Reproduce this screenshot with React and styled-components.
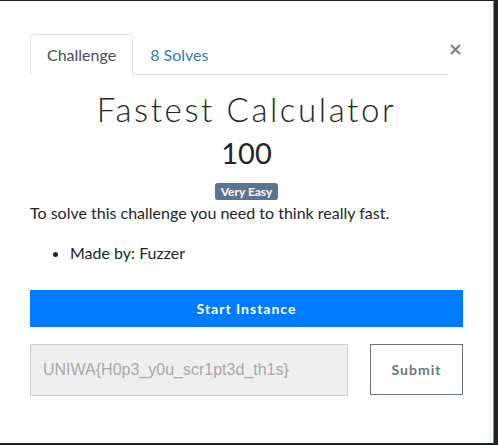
import React from 'react';
import styled, {createGlobalStyle} from 'styled-components';

const Global = createGlobalStyle`
    html, body {
        margin: 0;
        padding: 0;
        background: #1e241f;
    }
    body {
        font-family: Lato, "Open Sans", sans-serif;
        color: #212529;
    }
`;

const Modal = styled.div`
    position: relative;
    box-sizing: border-box;
    width: 494px;
    height: 442px;
    margin-top: 1px;
    background: #fff;
    border-right: 1px solid #8a8a8a;
    padding: 33px 30px 0 30px;
`;

const Header = styled.div`
    display: flex;
    align-items: flex-start;
`;

const Tabs = styled.ul`
    flex: 1;
    display: flex;
    margin: 0;
    padding: 0;
    list-style: none;
    border-bottom: 1px solid #dee2e6;
`;

const Tab = styled.li`
    box-sizing: border-box;
    height: 41px;
    padding: 0 16px;
    margin-bottom: -1px;
    display: flex;
    align-items: center;
    font-size: 16px;
    color: ${p => (p.active ? '#495057' : '#337ab7')};
    background: ${p => (p.active ? '#fff' : 'transparent')};
    border: 1px solid ${p => (p.active ? '#dee2e6' : 'transparent')};
    border-bottom-color: ${p => (p.active ? '#fff' : 'transparent')};
    border-radius: 4px 4px 0 0;
`;

const Close = styled.button`
    flex: none;
    box-sizing: border-box;
    border: 0;
    background: none;
    padding: 0 0 0 1px;
    margin-top: 5px;
    width: 14px;
    height: 20px;
    display: flex;
    align-items: center;
    justify-content: flex-start;
`;

const Title = styled.h2`
    margin: 14px 0 0 0;
    text-align: center;
    font-family: Lato, sans-serif;
    font-weight: 300;
    font-size: 33px;
    letter-spacing: 2.6px;
    line-height: 40px;
    color: #212529;
`;

const Points = styled.h3`
    margin: 4px 0 0 0;
    text-align: center;
    font-weight: 400;
    font-size: 29px;
    line-height: 40px;
`;

const BadgeRow = styled.div`
    display: flex;
    justify-content: center;
    margin-top: 10px;
`;

const Badge = styled.span`
    display: inline-block;
    background: #5b7390;
    color: #fff;
    font-size: 12px;
    font-weight: 700;
    line-height: 17px;
    padding: 0 6px;
    border-radius: 3px;
`;

const Description = styled.p`
    margin: 1px 0 0 0;
    font-size: 16px;
    line-height: 24px;
`;

const List = styled.ul`
    margin: 16px 0 0 0;
    padding-left: 40px;
    font-size: 16px;
    line-height: 24px;
`;

const StartButton = styled.button`
    display: block;
    width: 100%;
    height: 37px;
    margin-top: 25px;
    border: 0;
    background: #007bff;
    color: #fff;
    font-family: Lato, sans-serif;
    font-weight: 700;
    font-size: 14px;
    letter-spacing: 1px;
`;

const SubmitRow = styled.div`
    display: flex;
    justify-content: space-between;
    align-items: flex-start;
    margin-top: 17px;
`;

const FlagInput = styled.input`
    box-sizing: border-box;
    width: 318px;
    height: 52px;
    padding: 0 12px;
    background: #efefef;
    border: 1px solid #ccd0d4;
    font-family: "Liberation Sans", Arial, sans-serif;
    font-size: 16px;
    &::placeholder {
        color: #a8a8a8;
    }
`;

const SubmitButton = styled.button`
    box-sizing: border-box;
    width: 93px;
    height: 51px;
    background: #fff;
    border: 1px solid #6c757d;
    color: #6c757d;
    font-family: Lato, sans-serif;
    font-weight: 700;
    font-size: 14px;
    letter-spacing: 1px;
`;

export default function App() {
    return (
        <>
            <Global />
            <Modal>
                <Header>
                    <Tabs>
                        <Tab active>Challenge</Tab>
                        <Tab>8 Solves</Tab>
                    </Tabs>
                    <Close aria-label="Close">
                        <svg width="11" height="11" viewBox="0 0 11 11">
                            <path d="M1 1L10 10M10 1L1 10" stroke="#808080" strokeWidth="2.2" />
                        </svg>
                    </Close>
                </Header>
                <Title>Fastest Calculator</Title>
                <Points>100</Points>
                <BadgeRow>
                    <Badge>Very Easy</Badge>
                </BadgeRow>
                <Description>To solve this challenge you need to think really fast.</Description>
                <List>
                    <li>Made by: Fuzzer</li>
                </List>
                <StartButton>Start Instance</StartButton>
                <SubmitRow>
                    <FlagInput placeholder="UNIWA{H0p3_y0u_scr1pt3d_th1s}" />
                    <SubmitButton>Submit</SubmitButton>
                </SubmitRow>
            </Modal>
        </>
    );
}
